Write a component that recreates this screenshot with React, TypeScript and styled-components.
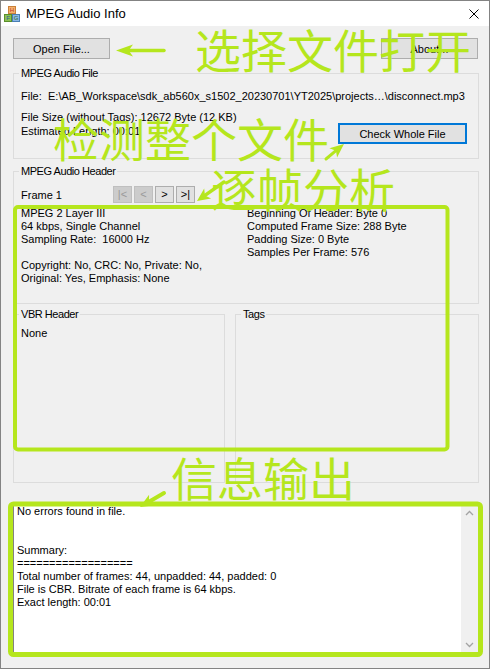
import React from "react";
import styled, { createGlobalStyle } from "styled-components";

const GREEN = "#b5e61d";

const GlobalStyle = createGlobalStyle`
  html, body {
    margin: 0;
    padding: 0;
    background: #f0f0f0;
  }
  body {
    font-family: "Liberation Sans", Arial, sans-serif;
  }
  * {
    box-sizing: border-box;
  }
`;

const Window = styled.div`
  position: relative;
  width: 490px;
  height: 669px;
  border: 1px solid #838383;
  background: #f0f0f0;
  display: flex;
  flex-direction: column;
  overflow: hidden;
  font-size: 11px;
  color: #000;
`;

const TitleBar = styled.div`
  height: 25px;
  flex: none;
  background: #fff;
  display: flex;
  align-items: center;
  padding-left: 3px;
`;

const TitleText = styled.span`
  margin-left: 6px;
  font-size: 13px;
  color: #000;
`;

const CloseBox = styled.div`
  margin-left: auto;
  margin-right: 10px;
  width: 10px;
  height: 10px;
  display: flex;
`;

const Body = styled.div`
  display: flex;
  flex-direction: column;
  padding: 0 10px 0 12px;
`;

const ButtonRow = styled.div`
  margin-top: 12px;
  display: flex;
  justify-content: space-between;
  padding-right: 1px;
`;

const PushButton = styled.button<{ $w: number; $focused?: boolean }>`
  width: ${(p) => p.$w}px;
  height: 21px;
  flex: none;
  padding: 0;
  margin: 0;
  background: #e1e1e1;
  border: ${(p) => (p.$focused ? "2px solid #0078d7" : "1px solid #adadad")};
  font-family: "Liberation Sans", Arial, sans-serif;
  font-size: 11px;
  color: #000;
`;

const Group = styled.fieldset<{ $h: number; $w?: number; $top: number; $grow?: boolean }>`
  margin: ${(p) => p.$top}px 0 0 0;
  padding: 0 7px;
  border: 1px solid #dcdcdc;
  min-width: 0;
  height: ${(p) => p.$h}px;
  width: ${(p) => (p.$w ? `${p.$w}px` : "auto")};
  flex: ${(p) => (p.$grow ? "1 1 0" : "none")};
  display: flex;
  flex-direction: column;
`;

const Legend = styled.legend`
  margin-left: -2px;
  padding: 0 2px;
  font-size: 11px;
  line-height: 14px;
  letter-spacing: -0.45px;
`;

const Line = styled.div<{ $top?: number }>`
  line-height: 13px;
  height: 13px;
  white-space: pre;
  margin-top: ${(p) => p.$top ?? 0}px;
`;

const FileLine = styled(Line)`
  display: flex;
`;

const FileLabel = styled.span`
  width: 27px;
`;

const SizeRow = styled.div`
  margin-top: 7px;
  display: flex;
  justify-content: space-between;
  padding-right: 4px;
`;

const SizeText = styled.div`
  line-height: 14px;
`;

const CheckButton = styled(PushButton)`
  margin-top: 13px;
`;

const FrameRow = styled.div`
  margin-top: 8px;
  display: flex;
  align-items: center;
  height: 17px;
`;

const FrameLabel = styled.span`
  width: 92px;
`;

const NavGroup = styled.div`
  display: flex;
  gap: 2px;
`;

const NavButton = styled.button<{ $disabled?: boolean }>`
  width: 19px;
  height: 17px;
  padding: 0;
  margin: 0;
  font-family: "Liberation Sans", Arial, sans-serif;
  font-size: 11px;
  line-height: 15px;
  background: ${(p) => (p.$disabled ? "#cccccc" : "#e1e1e1")};
  border: 1px solid ${(p) => (p.$disabled ? "#bfbfbf" : "#adadad")};
  color: ${(p) => (p.$disabled ? "#9a9a9a" : "#000")};
`;

const InfoGrid = styled.div`
  margin-top: 4px;
  display: grid;
  grid-template-columns: 226px 1fr;
`;

const Column = styled.div`
  display: flex;
  flex-direction: column;
`;

const SubRow = styled.div`
  margin-top: 3px;
  display: flex;
  gap: 10px;
`;

const Output = styled.div`
  margin-top: 20px;
  height: 151px;
  flex: none;
  display: flex;
  background: #fff;
  border: 1px solid #828282;
`;

const OutputText = styled.div`
  flex: 1;
  padding: 1px 3px 0;
  display: flex;
  flex-direction: column;
`;

const ScrollBar = styled.div`
  width: 17px;
  background: #f0f0f0;
  display: flex;
  flex-direction: column;
  justify-content: space-between;
  align-items: center;
  padding: 6px 0 5px;
`;

const Overlay = styled.div`
  position: absolute;
  left: -1px;
  top: -1px;
  width: 490px;
  height: 669px;
  pointer-events: none;
`;

const OverlaySvg = styled.svg`
  position: absolute;
  left: 0;
  top: 0;
`;

const Note = styled.div<{ $x: number; $y: number }>`
  position: absolute;
  left: ${(p) => p.$x}px;
  top: ${(p) => p.$y}px;
  font-family: "Noto Sans CJK SC", "Noto Sans", sans-serif;
  font-size: 46px;
  line-height: 46px;
  color: ${GREEN};
  white-space: nowrap;
`;

const arrowHead = (x1: number, y1: number, x2: number, y2: number, len: number, half: number) => {
  const d = Math.hypot(x2 - x1, y2 - y1);
  const ux = (x2 - x1) / d;
  const uy = (y2 - y1) / d;
  const nx = -uy;
  const ny = ux;
  const bx = x2 - ux * len;
  const by = y2 - uy * len;
  const mx = x2 - ux * len * 0.75;
  const my = y2 - uy * len * 0.75;
  return {
    points: `${x2},${y2} ${bx + nx * half},${by + ny * half} ${mx},${my} ${bx - nx * half},${by - ny * half}`,
    mx,
    my,
  };
};

const Arrow = ({ x1, y1, x2, y2, len, half, w }: { x1: number; y1: number; x2: number; y2: number; len: number; half: number; w: number }) => {
  const h = arrowHead(x1, y1, x2, y2, len, half);
  return (
    <g>
      <line x1={x1} y1={y1} x2={h.mx} y2={h.my} stroke={GREEN} strokeWidth={w} strokeLinecap="round" />
      <polygon points={h.points} fill={GREEN} />
    </g>
  );
};

const AppIcon = () => (
  <svg width="16" height="16" viewBox="0 0 16 16">
    <rect x="4.5" y="0.5" width="7" height="7" fill="#f5b26b" stroke="#c9803a" />
    <text x="8" y="6.3" fontSize="6" textAnchor="middle" fill="#c0392b" fontFamily="Liberation Sans">H</text>
    <rect x="0.5" y="8.5" width="7" height="7" fill="#8cc152" stroke="#5a8f2a" />
    <text x="4" y="14.3" fontSize="6" textAnchor="middle" fill="#2d5aa0" fontFamily="Liberation Sans">F</text>
    <rect x="8.5" y="8.5" width="7" height="7" fill="#8ab8e6" stroke="#4a7fb5" />
    <text x="12" y="14.3" fontSize="6" textAnchor="middle" fill="#2d6a2d" fontFamily="Liberation Sans">G</text>
  </svg>
);

const Chevron = ({ up }: { up?: boolean }) => (
  <svg width="9" height="6" viewBox="0 0 9 6">
    <polyline
      points={up ? "1,5 4.5,1.5 8,5" : "1,1 4.5,4.5 8,1"}
      fill="none"
      stroke="#a3a3a3"
      strokeWidth="1.3"
    />
  </svg>
);

const outputLines = [
  "No errors found in file.",
  "",
  "",
  "Summary:",
  "==================",
  "Total number of frames: 44, unpadded: 44, padded: 0",
  "File is CBR. Bitrate of each frame is 64 kbps.",
  "Exact length: 00:01",
];

export default function App() {
  return (
    <>
      <GlobalStyle />
      <Window>
        <TitleBar>
          <AppIcon />
          <TitleText>MPEG Audio Info</TitleText>
          <CloseBox>
            <svg width="10" height="10" viewBox="0 0 10 10">
              <path d="M0.5 0.5 L9.5 9.5 M9.5 0.5 L0.5 9.5" stroke="#000" strokeWidth="1" />
            </svg>
          </CloseBox>
        </TitleBar>

        <Body>
          <ButtonRow>
            <PushButton $w={97}>Open File...</PushButton>
            <PushButton $w={97}>About...</PushButton>
          </ButtonRow>

          <Group $top={7} $h={93}>
            <Legend>MPEG Audio File</Legend>
            <FileLine $top={10}>
              <FileLabel>File:</FileLabel>
              <span>{"E:\\AB_Workspace\\sdk_ab560x_s1502_20230701\\YT2025\\projects…\\disconnect.mp3"}</span>
            </FileLine>
            <SizeRow>
              <SizeText>
                <div>File Size (without Tags): 12672 Byte (12 KB)</div>
                <div>Estimated Length: 00:01</div>
              </SizeText>
              <CheckButton $w={129} $focused>
                Check Whole File
              </CheckButton>
            </SizeRow>
          </Group>

          <Group $top={5} $h={140}>
            <Legend>MPEG Audio Header</Legend>
            <FrameRow>
              <FrameLabel>Frame 1</FrameLabel>
              <NavGroup>
                <NavButton $disabled>|&lt;</NavButton>
                <NavButton $disabled>&lt;</NavButton>
                <NavButton>&gt;</NavButton>
                <NavButton>&gt;|</NavButton>
              </NavGroup>
            </FrameRow>
            <InfoGrid>
              <Column>
                <Line>MPEG 2 Layer III</Line>
                <Line>64 kbps, Single Channel</Line>
                <Line>Sampling Rate:  16000 Hz</Line>
                <Line />
                <Line>Copyright: No, CRC: No, Private: No,</Line>
                <Line>Original: Yes, Emphasis: None</Line>
              </Column>
              <Column>
                <Line>Beginning Of Header: Byte 0</Line>
                <Line>Computed Frame Size: 288 Byte</Line>
                <Line>Padding Size: 0 Byte</Line>
                <Line>Samples Per Frame: 576</Line>
              </Column>
            </InfoGrid>
          </Group>

          <SubRow>
            <Group $top={0} $h={176} $w={212}>
              <Legend>VBR Header</Legend>
              <Line $top={6}>None</Line>
            </Group>
            <Group $top={0} $h={176} $grow>
              <Legend>Tags</Legend>
            </Group>
          </SubRow>

          <Output>
            <OutputText>
              {outputLines.map((l, i) => (
                <Line key={i}>{l}</Line>
              ))}
            </OutputText>
            <ScrollBar>
              <Chevron up />
              <Chevron />
            </ScrollBar>
          </Output>
        </Body>

        <Overlay>
          <OverlaySvg width="490" height="669" viewBox="0 0 490 669">
            <rect x="15" y="207" width="432.5" height="242.5" rx="3" fill="none" stroke={GREEN} strokeWidth="4" />
            <rect x="10.5" y="504" width="470" height="150.5" rx="3" fill="none" stroke={GREEN} strokeWidth="5" />
            <Arrow x1={164} y1={50.5} x2={116} y2={50.5} len={17} half={6} w={3.5} />
            <Arrow x1={326} y1={159} x2={344} y2={144} len={14} half={6} w={3} />
            <Arrow x1={224} y1={182} x2={197} y2={201} len={13} half={6} w={3.5} />
            <Arrow x1={164} y1={493} x2={140} y2={507} len={14} half={6} w={4} />
          </OverlaySvg>
          <Note $x={195} $y={25}>选择文件打开</Note>
          <Note $x={53} $y={114}>检测整个文件</Note>
          <Note $x={211} $y={164}>逐帧分析</Note>
          <Note $x={171} $y={453}>信息输出</Note>
        </Overlay>
      </Window>
    </>
  );
}
